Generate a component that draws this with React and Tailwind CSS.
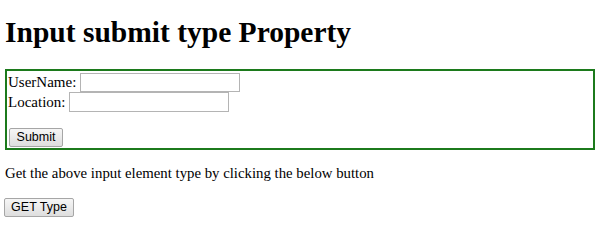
import React from 'react';

const btn =
  "h-[19px] px-[6px] border border-[#a6a6a6] rounded-[2px] bg-gradient-to-b from-[#f6f6f6] to-[#dedede] text-[12.5px] leading-none text-black font-['Liberation_Sans',Arial,sans-serif]";

const input = "h-[19px] border border-[#b4b4b4] bg-white outline-none";

export default function App() {
  return (
    <div className="min-h-[227px] bg-white text-black font-['Liberation_Serif','Times_New_Roman',serif] px-[5px] pt-[15px]">
      <h1 className="text-[29.5px] font-bold leading-[34px]">Input submit type Property</h1>

      <form
        onSubmit={(e) => e.preventDefault()}
        className="mt-[20px] h-[81px] border-2 border-[#1c7a1c] pl-[1px] pt-[2px] text-[15px] leading-[17px]"
      >
        <div className="flex items-center h-[19px]">
          <label className="mr-[4px]">UserName:</label>
          <input type="text" className={`${input} w-[160px]`} />
        </div>
        <div className="flex items-center h-[20px]">
          <label className="mr-[4px]">Location:</label>
          <input type="text" className={`${input} w-[160px] h-[20px]`} />
        </div>
        <div className="flex mt-[16px] pl-[1px]">
          <button type="submit" className={`${btn} w-[54px]`}>Submit</button>
        </div>
      </form>

      <p className="mt-[15px] text-[14.8px] leading-[17px]">
        Get the above input element type by clicking the below button
      </p>

      <div className="flex mt-[16px]">
        <button type="button" className={`${btn} w-[70px] -ml-[1px]`}>GET Type</button>
      </div>
    </div>
  );
}
